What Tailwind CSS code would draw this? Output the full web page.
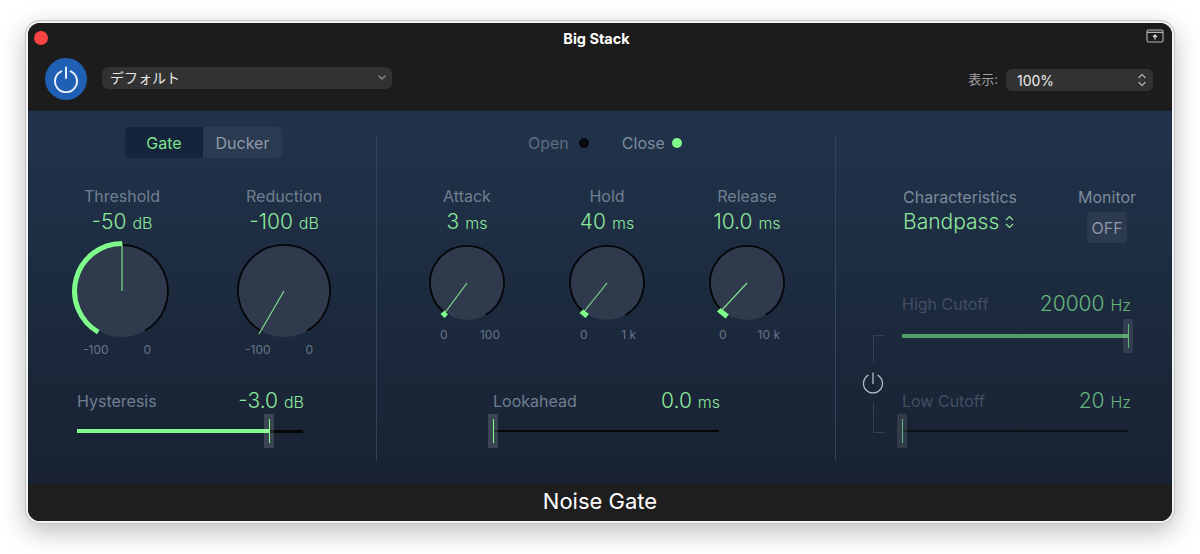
<!DOCTYPE html>
<html lang="ja">

<head>
  <meta charset="UTF-8">
  <title>Noise Gate</title>
  <script src="https://cdn.jsdelivr.net/npm/@tailwindcss/browser@4"></script>
</head>

<body class="bg-white h-[554px] overflow-hidden font-['Inter','Noto_Sans_CJK_JP',sans-serif]">
  <!-- Window -->
  <div class="mt-[21px] ml-[26px] w-[1148px] h-[502px] flex flex-col rounded-[14px] border-2 border-[#f2f2f2] ring-1 ring-[#c4c4c4] overflow-hidden bg-[#1c1c1c] shadow-[0_8px_26px_rgba(0,0,0,0.28)]">

    <!-- Header -->
    <header class="h-[87px] shrink-0 bg-[#1c1c1c] text-white">
      <div class="h-[28px] flex items-center pl-[6px] pr-[8px]">
        <div class="flex-1"><div class="w-[14px] h-[14px] rounded-full bg-[#fb4544] mt-[2px]"></div></div>
        <div class="pr-[5px] text-[14.5px] font-bold mt-[4px]">Big Stack</div>
        <div class="flex-1 flex justify-end">
          <svg width="18" height="14" viewBox="0 0 18 14" fill="none" stroke="#b5b5b5" stroke-width="1.1" class="-mt-[3px]">
            <rect x="1" y="1" width="16" height="12" rx="1.5" />
            <path d="M1 3.400H17" />
            <path d="M9 10.500V6M7 8l2-2 2 2" stroke="#e8e8e8" />
          </svg>
        </div>
      </div>
      <div class="flex items-center pl-[17px] pr-[19px] h-[47px]">
        <div class="w-[42px] h-[42px] rounded-full bg-[#2060b4] flex items-center justify-center mt-[8px]">
          <svg width="28" height="28" viewBox="0 0 28 28" fill="none" stroke="#e6edf7" stroke-width="2" stroke-linecap="round">
            <path d="M9.200 6.300a11 11 0 1 0 9.600 0" />
            <path d="M14 2.500V13" />
          </svg>
        </div>
        <div class="ml-[15px] mt-[6px] w-[290px] h-[22px] rounded-[6px] bg-[#323232] flex items-center justify-between pl-[8px] pr-[5px] text-[14px] text-[#e6e6e6]">
          <span>デフォルト</span>
          <svg width="10" height="7" viewBox="0 0 10 7" fill="none" stroke="#8c8c8c" stroke-width="1.400"><path d="M1.500 1.500 5 5l3.500-3.500" /></svg>
        </div>
        <div class="ml-auto flex items-center mt-[11px]">
          <span class="text-[13px] text-[#a0a0a0] mr-[8px]">表示:</span>
          <div class="w-[147px] h-[22px] rounded-[6px] bg-[#323232] flex items-center justify-between pl-[11px] pr-[6px] text-[14px] text-[#ececec]">
            <span>100%</span>
            <svg width="10" height="14" viewBox="0 0 10 14" fill="none" stroke="#a8a8a8" stroke-width="1.300"><path d="M1.500 5 5 1.500 8.500 5M1.500 9 5 12.500 8.500 9" /></svg>
          </div>
        </div>
      </div>
    </header>

    <!-- Main panel -->
    <main class="h-[374px] shrink-0 flex bg-gradient-to-b from-[#21334b] to-[#182232] border-t border-[#17202c]">

      <!-- Left column -->
      <section class="w-[348px] shrink-0 flex flex-col">
        <div class="mt-[16px] ml-[97px] flex w-[157px] h-[31px] rounded-[5px] overflow-hidden text-[16px]">
          <div class="w-[78px] bg-[#15243a] text-[#7fe08c] flex items-center justify-center">Gate</div>
          <div class="flex-1 bg-[#2a3a50] text-[#8f9aa9] flex items-center justify-center">Ducker</div>
        </div>

        <div class="mt-[28px] ml-[42px] flex gap-[58px]">
          <!-- Threshold -->
          <div class="w-[104px]">
            <div class="h-[20px] leading-[20px] text-center text-[16px] text-[#6f7f91]">Threshold</div>
            <div class="h-[32px] leading-[32px] text-center text-[21px] font-light text-[#8ce89b]">-50 <span class="text-[16px]">dB</span></div>
            <svg width="104" height="104" viewBox="0 0 104 104" fill="none" class="mt-[1px]">
              <circle cx="52" cy="52" r="46" fill="#2f3a4d" />
              <path d="M52 6A46 46 0 0 1 75 91.800" stroke="#050608" stroke-width="1.800" />
              <path d="M28.250 93.100A47.500 47.500 0 0 1 52 4.500" stroke="#7ffc8a" stroke-width="5" />
              <path d="M52 4V52" stroke="#7fe08c" stroke-width="1.200" />
            </svg>
            <div class="flex justify-between pl-[13px] pr-[23px] text-[12px] leading-[14px] text-[#66768a]"><span>-100</span><span>0</span></div>
          </div>
          <!-- Reduction -->
          <div class="w-[104px]">
            <div class="h-[20px] leading-[20px] text-center text-[16px] text-[#6f7f91]">Reduction</div>
            <div class="h-[32px] leading-[32px] text-center text-[21px] font-light text-[#8ce89b]">-100 <span class="text-[16px]">dB</span></div>
            <svg width="104" height="104" viewBox="0 0 104 104" fill="none" class="mt-[1px]">
              <circle cx="52" cy="52" r="46" fill="#2f3a4d" />
              <path d="M29 91.800A46 46 0 1 1 75 91.800" stroke="#050608" stroke-width="1.800" />
              <path d="M52 52 27 95" stroke="#7fe08c" stroke-width="1.200" />
            </svg>
            <div class="flex justify-between pl-[13px] pr-[23px] text-[12px] leading-[14px] text-[#66768a]"><span>-100</span><span>0</span></div>
          </div>
        </div>

        <!-- Hysteresis -->
        <div class="mt-[32px] ml-[49px] w-[226px]">
          <div class="flex items-center justify-between h-[24px]">
            <span class="text-[16px] text-[#6f7f91]">Hysteresis</span>
            <span class="text-[21px] font-light text-[#8ce89b] -mr-[1px]">-3.0 <span class="text-[16px]">dB</span></span>
          </div>
          <div class="relative h-[34px] mt-[1px] flex items-center">
            <div class="w-full h-[3px] bg-[#050608]"></div>
            <div class="absolute left-0 top-[15px] w-[193px] h-[4px] bg-[#7ffc8a]"></div>
            <div class="absolute left-[187px] top-0 w-[10px] h-[34px] bg-white/15 flex pl-[5px] py-[5px]"><div class="w-px bg-[#7ffc8a]"></div></div>
          </div>
        </div>
      </section>

      <div class="w-px my-[24px] bg-[#33445a]"></div>

      <!-- Middle column -->
      <section class="w-[458px] shrink-0 flex flex-col">
        <div class="mt-[22px] h-[20px] flex items-center text-[16px]">
          <span class="ml-[151px] text-[#5f6e80]">Open</span>
          <span class="ml-[10px] w-[10px] h-[10px] rounded-full bg-[#07090c]"></span>
          <span class="ml-[33px] text-[#7d8b9c]">Close</span>
          <span class="ml-[7px] w-[10px] h-[10px] rounded-full bg-[#7ffc8a]"></span>
        </div>

        <div class="mt-[33px] ml-[50px] flex gap-[60px]">
          <!-- Attack -->
          <div class="w-[80px]">
            <div class="h-[20px] leading-[20px] text-center text-[16px] text-[#6f7f91]">Attack</div>
            <div class="h-[32px] leading-[32px] text-center text-[21px] font-light text-[#8ce89b] whitespace-nowrap">3 <span class="text-[16px]">ms</span></div>
            <svg width="80" height="80" viewBox="0 0 80 80" fill="none" class="mt-[5px]">
              <circle cx="40" cy="40" r="37" fill="#2f3a4d" />
              <path d="M21.500 72A37 37 0 1 1 58.500 72" stroke="#050608" stroke-width="1.800" />
              <path d="M40 40 17 71" stroke="#7fe08c" stroke-width="1.200" />
              <path d="M13.500 71 17.500 67.500 21 71.500 17.500 75Z" fill="#7ffc8a" />
            </svg>
            <div class="mt-[5px] flex justify-between pl-[13px] pr-[7px] text-[12px] leading-[14px] text-[#66768a]"><span>0</span><span>100</span></div>
          </div>
          <!-- Hold -->
          <div class="w-[80px]">
            <div class="h-[20px] leading-[20px] text-center text-[16px] text-[#6f7f91]">Hold</div>
            <div class="h-[32px] leading-[32px] text-center text-[21px] font-light text-[#8ce89b] whitespace-nowrap">40 <span class="text-[16px]">ms</span></div>
            <svg width="80" height="80" viewBox="0 0 80 80" fill="none" class="mt-[5px]">
              <circle cx="40" cy="40" r="37" fill="#2f3a4d" />
              <path d="M21.500 72A37 37 0 1 1 58.500 72" stroke="#050608" stroke-width="1.800" />
              <path d="M40 40 16 70" stroke="#7fe08c" stroke-width="1.200" />
              <path d="M12.500 70 16 66.500 22 71 18.500 75Z" fill="#7ffc8a" />
            </svg>
            <div class="mt-[5px] flex justify-between pl-[13px] pr-[11px] text-[12px] leading-[14px] text-[#66768a]"><span>0</span><span>1 k</span></div>
          </div>
          <!-- Release -->
          <div class="w-[80px]">
            <div class="h-[20px] leading-[20px] text-center text-[16px] text-[#6f7f91]">Release</div>
            <div class="h-[32px] leading-[32px] text-center text-[21px] font-light text-[#8ce89b] whitespace-nowrap">10.0 <span class="text-[16px]">ms</span></div>
            <svg width="80" height="80" viewBox="0 0 80 80" fill="none" class="mt-[5px]">
              <circle cx="40" cy="40" r="37" fill="#2f3a4d" />
              <path d="M21.500 72A37 37 0 1 1 58.500 72" stroke="#050608" stroke-width="1.800" />
              <path d="M40 40 14 68" stroke="#7fe08c" stroke-width="1.200" />
              <path d="M10 68.500 13.500 65 22 71.500 18.500 75.500Z" fill="#7ffc8a" />
            </svg>
            <div class="mt-[5px] flex justify-between pl-[12px] pr-[7px] text-[12px] leading-[14px] text-[#66768a]"><span>0</span><span>10 k</span></div>
          </div>
        </div>

        <!-- Lookahead -->
        <div class="mt-[47px] ml-[116px] w-[226px]">
          <div class="flex items-center justify-between h-[24px]">
            <span class="text-[16px] text-[#6f7f91]">Lookahead</span>
            <span class="text-[21px] font-light text-[#8ce89b] -mr-[1px]">0.0 <span class="text-[16px]">ms</span></span>
          </div>
          <div class="relative h-[34px] mt-[1px] flex items-center">
            <div class="w-full h-[2px] bg-[#050608]"></div>
            <div class="absolute -left-[5px] top-0 w-[10px] h-[34px] bg-white/15 flex pl-[5px] py-[5px]"><div class="w-px bg-[#7ffc8a]"></div></div>
          </div>
        </div>
      </section>

      <div class="w-px my-[24px] bg-[#33445a]"></div>

      <!-- Right column -->
      <section class="flex-1 relative">
        <div class="mt-[76px] ml-[67px] flex">
          <div class="w-[175px]">
            <div class="h-[20px] leading-[20px] text-[16px] text-[#7d8b9c]">Characteristics</div>
            <div class="mt-[1px] h-[28px] leading-[28px] text-[21px] font-light text-[#8ce89b] flex items-center gap-[6px]">
              Bandpass
              <svg width="9" height="14" viewBox="0 0 9 14" fill="none" stroke="#8ce89b" stroke-width="1.200"><path d="M1 5 4.500 1.500 8 5M1 9l3.500 3.500L8 9" /></svg>
            </div>
          </div>
          <div class="flex flex-col items-center">
            <div class="h-[20px] leading-[20px] text-[16px] text-[#7d8b9c]">Monitor</div>
            <div class="mt-[5px] w-[40px] h-[31px] rounded-[4px] bg-[#2c3a4e] text-[#8a96a5] text-[16px] flex items-center justify-center">OFF</div>
          </div>
        </div>

        <!-- Cutoff sliders -->
        <div class="mt-[49px] ml-[66px] w-[226px]">
          <div class="flex items-center justify-between h-[24px]">
            <span class="text-[16px] text-[#414f61]">High Cutoff</span>
            <span class="text-[21px] font-light text-[#66b57e] -mr-[3px]">20000 <span class="text-[16px]">Hz</span></span>
          </div>
          <div class="relative h-[34px] mt-[3px] flex items-center">
            <div class="w-full h-[4px] bg-[#519e66]"></div>
            <div class="absolute left-[221px] top-0 w-[10px] h-[34px] bg-white/10 flex pl-[5px] py-[5px]"><div class="w-px bg-[#66b57e]"></div></div>
          </div>
          <div class="flex items-center justify-between h-[24px] mt-[36px]">
            <span class="text-[16px] text-[#414f61]">Low Cutoff</span>
            <span class="text-[21px] font-light text-[#66b57e] -mr-[3px]">20 <span class="text-[16px]">Hz</span></span>
          </div>
          <div class="relative h-[34px] mt-[1px] flex items-center">
            <div class="w-full h-[2px] bg-[#0c1118]"></div>
            <div class="absolute -left-[5px] top-0 w-[10px] h-[34px] bg-white/10 flex pl-[5px] py-[5px]"><div class="w-px bg-[#66b57e]"></div></div>
          </div>
        </div>

        <!-- Link bracket with power toggle -->
        <svg width="28" height="102" viewBox="0 0 28 102" fill="none" class="absolute left-[25px] top-[224px]">
          <path d="M13 .5H1.500M1.500 .5V28M1.500 67V97.500H13" stroke="#334152" transform="translate(11 0)" />
          <path d="M7.500 40.100a9.500 9.500 0 1 0 9 0" stroke="#b4bbc4" stroke-width="1.300" />
          <path d="M12 37.500V49" stroke="#b4bbc4" stroke-width="1.300" />
        </svg>
      </section>
    </main>

    <!-- Footer -->
    <footer class="flex-1 bg-[#1e1e1e] flex items-center justify-center text-white text-[22px] pb-[3px]">Noise Gate</footer>
  </div>
</body>

</html>
